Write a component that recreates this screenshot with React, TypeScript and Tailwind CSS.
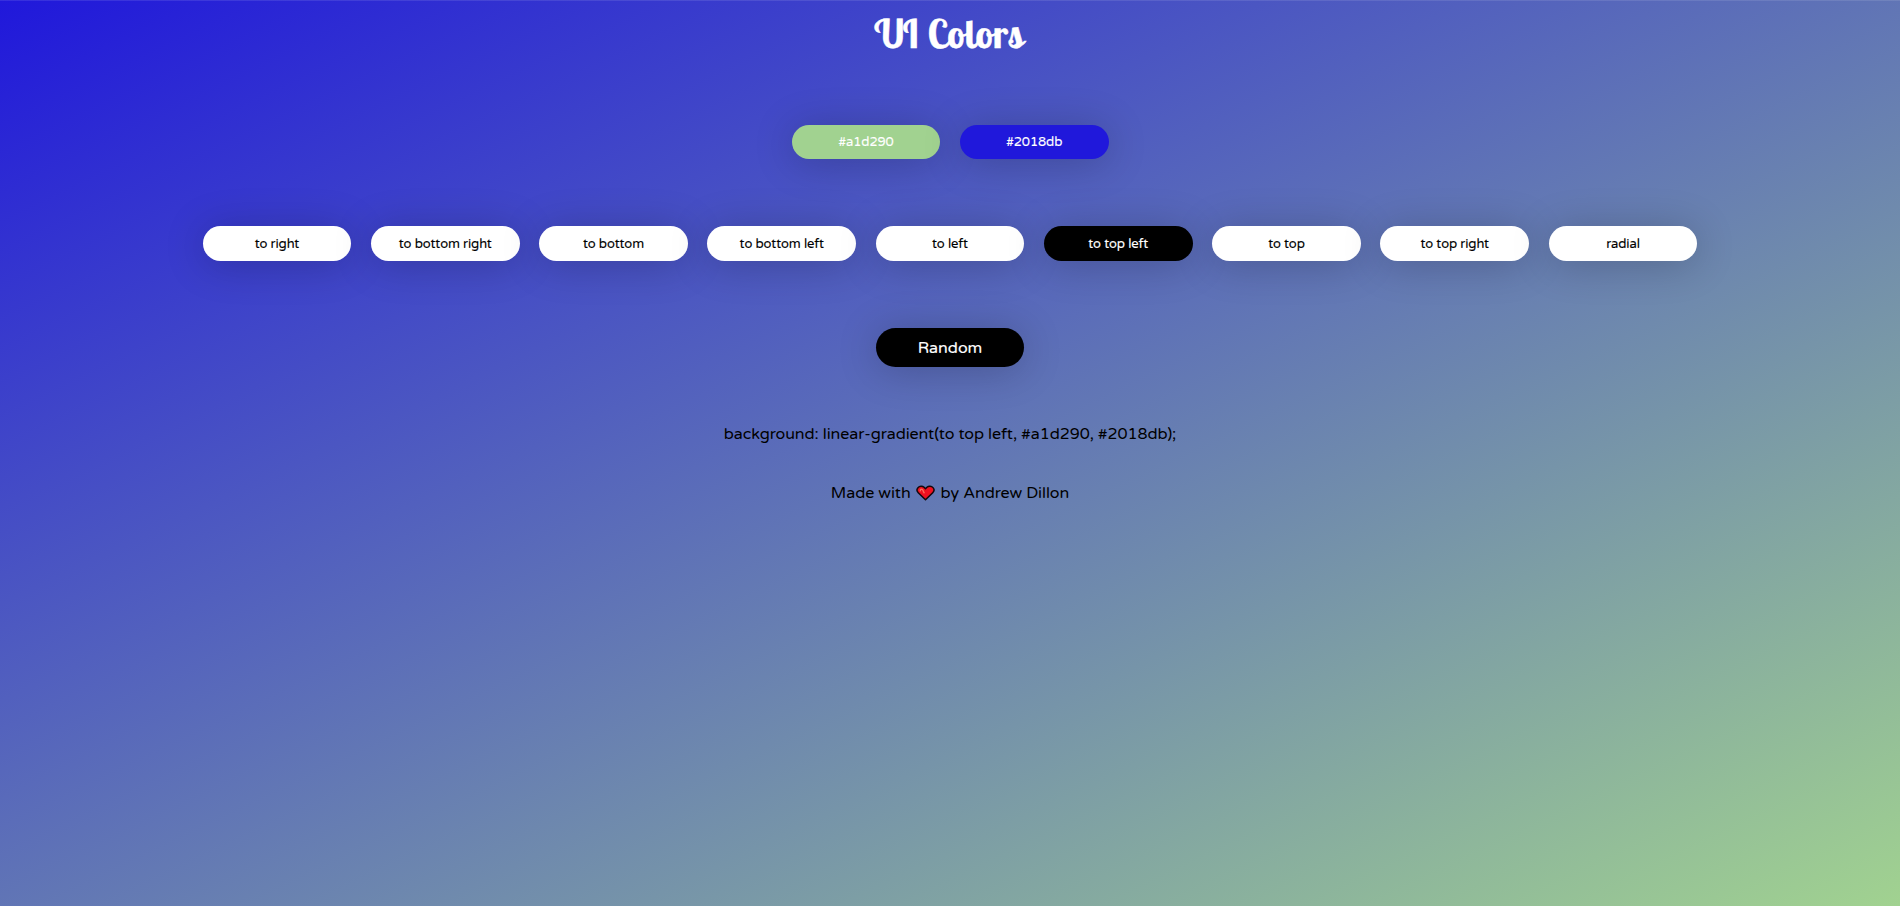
const directions = [
  'to right',
  'to bottom right',
  'to bottom',
  'to bottom left',
  'to left',
  'to top left',
  'to top',
  'to top right',
  'radial',
];

const pill =
  'flex w-[148.75px] shrink-0 items-center justify-center rounded-full shadow-[0_3px_40px_rgba(0,0,0,0.22)]';

const smallLabel = 'pt-[2px] text-[13px] tracking-[-0.1px] [-webkit-text-stroke:0.12px_currentColor]';

function Heart() {
  return (
    <svg viewBox="0 0 20 17" className="mr-[6px] ml-[5px] h-[16px] w-[19px] shrink-0" aria-label="love">
      <path
        d="M10 15.6 2.3 8.2C.8 6.7.7 4.3 2 2.8 3.7.8 6.7.7 8.5 2.4L10 3.9l1.5-1.5c1.8-1.7 4.8-1.6 6.5.4 1.3 1.5 1.2 3.9-.3 5.4Z"
        fill="#f01020"
        stroke="#14080c"
        strokeWidth="1.6"
        strokeLinejoin="round"
      />
      <path d="M4.5 6.2c0-1.4 1.2-2.1 2.2-1.4.9.7.8 2 1.8 3.4" fill="none" stroke="#ff6a58" strokeWidth="1.5" strokeLinecap="round" />
    </svg>
  );
}

export default function App() {
  return (
    <main className="flex h-[906px] w-full flex-col items-center overflow-hidden bg-[linear-gradient(to_top_left,#a1d290,#2018db)] font-['Varela_Round','Noto_Sans',sans-serif] text-black shadow-[inset_0_1px_0_rgba(255,255,255,0.1)]">
      <h1 className="mt-[9px] flex h-[50px] -skew-x-[-12deg] items-center font-['Lobster','Liberation_Serif',serif] text-[39px] font-normal tracking-[0.3px] whitespace-nowrap text-white [-webkit-text-stroke:0.5px_currentColor]">
        UI Colors
      </h1>
      <div className="mt-[66px] flex gap-[19.5px] text-white">
        <button className={`${pill} ${smallLabel} h-[34px] bg-[#a1d290]`}>#a1d290</button>
        <button className={`${pill} ${smallLabel} h-[34px] bg-[#2018db]`}>#2018db</button>
      </div>
      <div className="mt-[67px] flex gap-[19.5px]">
        {directions.map((label) => (
          <button
            key={label}
            className={`${pill} ${smallLabel} h-[35px] ${label === 'to top left' ? 'bg-black text-white' : 'bg-white text-black'}`}
          >
            {label}
          </button>
        ))}
      </div>
      <button className={`${pill} mt-[67px] h-[39px] bg-black text-[16px] text-white [-webkit-text-stroke:0.15px_currentColor]`}>
        Random
      </button>
      <p className="mt-[55px] h-[24px] text-[16px] leading-[24px] tracking-[-0.07px] whitespace-nowrap">
        background: linear-gradient(to top left, #a1d290, #2018db);
      </p>
      <p className="mt-[35px] flex h-[24px] items-center text-[16px] leading-[24px] tracking-[-0.05px] whitespace-nowrap">
        <span>Made with</span>
        <Heart />
        <span>by Andrew Dillon</span>
      </p>
    </main>
  );
}
